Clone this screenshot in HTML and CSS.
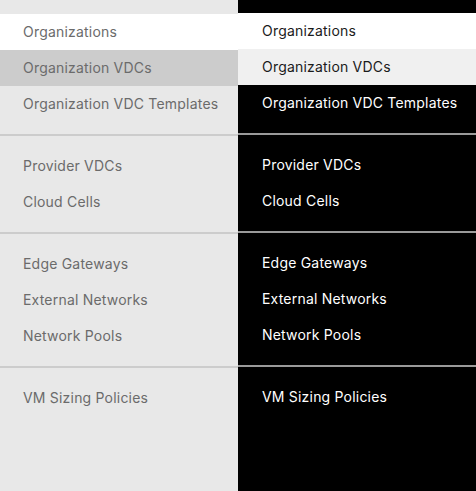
FILE: index.html
```html
<!DOCTYPE html>
<html lang="en">
<head>
<meta charset="utf-8">
<title>Navigation</title>
<link rel="stylesheet" href="styles.css">
</head>
<body>
<div class="layout">
  <nav class="panel panel-light">
    <div class="group">
      <a class="item selected">Organizations</a>
      <a class="item hover">Organization VDCs</a>
      <a class="item">Organization VDC Templates</a>
    </div>
    <div class="group">
      <a class="item">Provider VDCs</a>
      <a class="item">Cloud Cells</a>
    </div>
    <div class="group">
      <a class="item">Edge Gateways</a>
      <a class="item">External Networks</a>
      <a class="item">Network Pools</a>
    </div>
    <div class="group">
      <a class="item">VM Sizing Policies</a>
    </div>
  </nav>
  <nav class="panel panel-dark">
    <div class="group">
      <a class="item selected">Organizations</a>
      <a class="item hover">Organization VDCs</a>
      <a class="item">Organization VDC Templates</a>
    </div>
    <div class="group">
      <a class="item">Provider VDCs</a>
      <a class="item">Cloud Cells</a>
    </div>
    <div class="group">
      <a class="item">Edge Gateways</a>
      <a class="item">External Networks</a>
      <a class="item">Network Pools</a>
    </div>
    <div class="group">
      <a class="item">VM Sizing Policies</a>
    </div>
  </nav>
</div>
</body>
</html>
```

FILE: styles.css
```css
html, body {
  margin: 0;
  padding: 0;
  height: 100%;
}

body {
  font-family: Inter, "Open Sans", sans-serif;
  font-size: 14px;
  letter-spacing: 0.2px;
}

.layout {
  display: flex;
  height: 100%;
}

.panel {
  width: 238px;
  display: flex;
  flex-direction: column;
}

.group {
  display: flex;
  flex-direction: column;
  padding: 12px 0;
  border-top: 2px solid #cccccc;
}

.group:first-child {
  border-top: none;
  padding-top: 14px;
}

.item {
  display: block;
  height: 36px;
  line-height: 36px;
  white-space: nowrap;
  cursor: pointer;
}

.panel-light {
  background: #e8e8e8;
}

.panel-light .item {
  padding-left: 23px;
  color: #6b6b6b;
}

.panel-light .item.selected {
  background: #ffffff;
}

.panel-light .item.hover {
  background: #cccccc;
}

.panel-dark {
  background: #000000;
}

.panel-dark .group {
  border-top-color: #9a9a9a;
}

.panel-dark .group:first-child {
  padding-top: 13px;
}

.panel-dark .item {
  padding-left: 24px;
  color: #ffffff;
}

.panel-dark .item.selected {
  background: #ffffff;
  color: #1b1b1b;
}

.panel-dark .item.hover {
  background: #f0f0f0;
  color: #1b1b1b;
}
```
